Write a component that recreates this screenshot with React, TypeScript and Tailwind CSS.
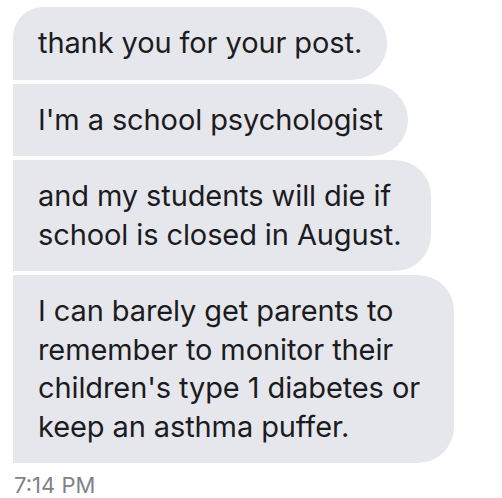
const MESSAGES = [
  { text: "thank you for your post.", corners: "rounded-tl-[30px] rounded-r-[36px] pr-[25px]" },
  { text: "I'm a school psychologist", corners: "rounded-r-[36px] pr-[25px]" },
  { text: "and my students will die if\nschool is closed in August.", corners: "rounded-r-[36px] pr-[30px]" },
  {
    text: "I can barely get parents to\nremember to monitor their\nchildren's type 1 diabetes or\nkeep an asthma puffer.",
    corners: "rounded-r-[36px] pr-[34px]",
  },
];

export default function App() {
  return (
    <div
      className="h-[498px] w-[502px] overflow-hidden bg-white pl-[13px] pt-[7px]"
      style={{ fontFamily: "Inter, 'Noto Sans', sans-serif" }}
    >
      <div className="flex flex-col items-start gap-[4px]">
        {MESSAGES.map((m, i) => (
          <div
            key={i}
            className={
              "whitespace-pre-line bg-[#e6e7ed] py-[17px] pl-[25px] text-[29px] leading-[38.5px] tracking-[-0.1px] text-[#1c1c20] " +
              m.corners
            }
          >
            {m.text}
          </div>
        ))}
      </div>
      <div className="mt-[11px] pl-[1px] text-[22px] leading-[22px] text-[#7f828a]">7:14 PM</div>
    </div>
  );
}
